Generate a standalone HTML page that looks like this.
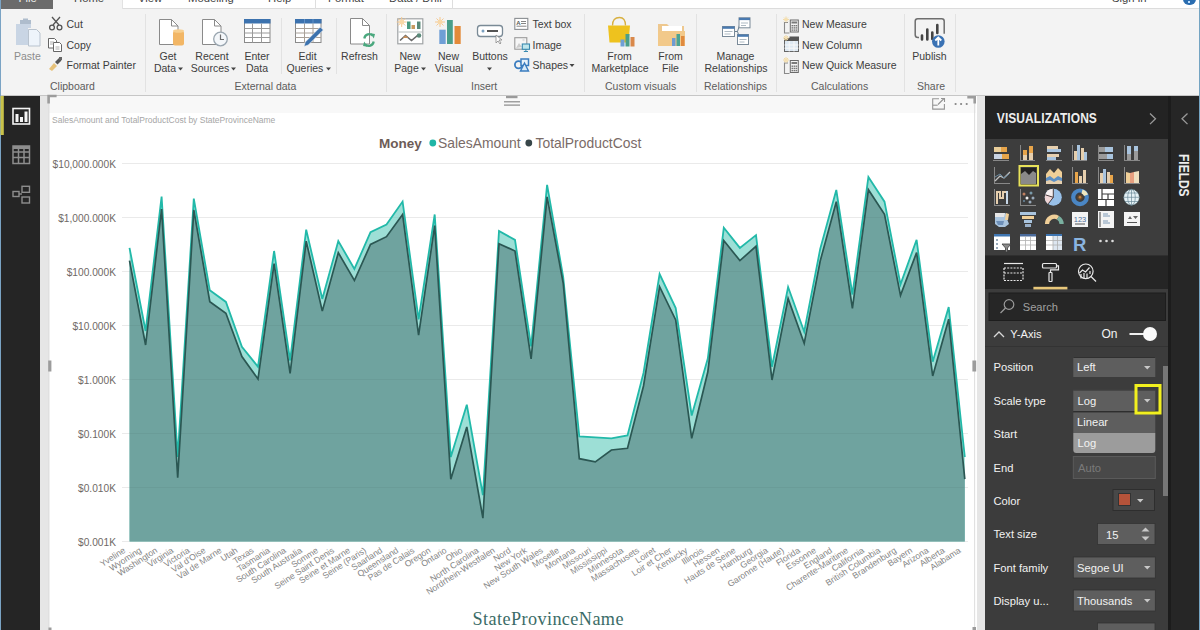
<!DOCTYPE html>
<html><head><meta charset="utf-8">
<style>
*{margin:0;padding:0;box-sizing:border-box}
html,body{width:1200px;height:630px;overflow:hidden;background:#f3f3f3;font-family:"Liberation Sans",sans-serif;position:relative}
.a{position:absolute}
.t{position:absolute;white-space:nowrap;font-size:11px;color:#333;line-height:1}
svg.chart{position:absolute;left:0;top:0}
.yl{font-family:"Liberation Sans",sans-serif;font-size:10.2px;fill:#6f6966}
.xl{font-family:"Liberation Sans",sans-serif;font-size:8.7px;fill:#858585}
/* tabs */
#tabs{left:0;top:0;width:1200px;height:9px;background:#fff;border-bottom:1px solid #dcdcdc}
#file{left:1px;top:0;width:52px;height:9px;background:#6b6b6b}
#home{left:53px;top:0;width:69px;height:10px;background:#f3f3f3}
.tab{position:absolute;top:-8px;font-size:11.3px;color:#444;white-space:nowrap;line-height:1}
/* ribbon */
#ribbon{left:0;top:9px;width:1200px;height:87px;background:#f3f3f3;border-bottom:1px solid #c6c6c6}
.sep{position:absolute;top:12px;width:1px;height:80px;background:#e0e0e0}
.grp{position:absolute;top:80px;font-size:11px;color:#555;white-space:nowrap;line-height:1}
/* rail */
#rail{left:0;top:96px;width:40px;height:534px;background:#252525}
#leftline{left:0;top:0;width:1px;height:630px;background:#7aa3c4}
#rightline{left:1198.5px;top:0;width:1.5px;height:630px;background:#74a4c2}
#canvasbg{left:40px;top:96px;width:945px;height:534px;background:#e6e6e6}
#page{left:49px;top:96px;width:927.5px;height:534px;background:#fff}
#vizpane{left:985px;top:96px;width:183px;height:534px;background:#3b3b3b}
#fieldspane{left:1168px;top:96px;width:29px;height:534px;background:#252525;border-left:1px solid #1a1a1a}
</style></head><body>
<div id="tabs" class="a"></div>
<div id="file" class="a"></div>
<div id="home" class="a"></div>
<div id="ribbon" class="a"></div>
<div id="canvasbg" class="a"></div>
<div id="page" class="a"></div>
<div id="rail" class="a"></div>
<div id="leftline" class="a"></div>
<div id="vizpane" class="a"></div>
<div id="fieldspane" class="a"></div>
<div id="rightline" class="a"></div>

<div class="tab" style="left:74px;top:-7.5px">Home</div>
<div class="tab" style="left:138px;top:-7.5px">View</div>
<div class="tab" style="left:188px;top:-7.5px">Modeling</div>
<div class="tab" style="left:268px;top:-7.5px">Help</div>
<div class="a" style="left:315px;top:0;width:1px;height:9px;background:#dedede"></div><div class="a" style="left:452px;top:0;width:1px;height:9px;background:#dedede"></div><div class="a" style="left:122px;top:0;width:1px;height:9px;background:#e2e2e2"></div>
<div class="tab" style="left:328px;top:-7.5px">Format</div>
<div class="tab" style="left:389px;top:-7.5px">Data / Drill</div>
<div class="tab" style="left:18.5px;top:-7.5px;color:#f0f0f0">File</div>
<div class="tab" style="left:1112px;top:-7.5px">Sign in</div>
<div class="a" style="left:1182.5px;top:-7.5px;width:13px;height:12.5px;border-radius:7px;background:#2a6db0"></div><div class="a" style="left:1187.8px;top:1px;width:2.4px;height:2.4px;background:#bfe0ff"></div>
<svg class="a" style="left:0;top:0" width="1200" height="96" font-family="Liberation Sans, sans-serif" font-size="10.5">
<g fill="#e2e2e2">
<rect x="145" y="14" width="1" height="78"/><rect x="386" y="14" width="1" height="78"/>
<rect x="584" y="14" width="1" height="78"/><rect x="696" y="14" width="1" height="78"/>
<rect x="776" y="14" width="1" height="78"/><rect x="904" y="14" width="1" height="78"/>
<rect x="955" y="14" width="1" height="78"/>
<rect x="281" y="18" width="1" height="56"/><rect x="336" y="18" width="1" height="56"/>
</g>
<!-- Paste -->
<rect x="16" y="24" width="12" height="21" fill="#c9d5e4"/>
<rect x="20" y="20" width="11" height="4" fill="#aebccc"/><rect x="23" y="18.5" width="5" height="3" fill="#aebccc"/>
<rect x="28" y="24" width="3" height="4" fill="#c9d5e4"/>
<path d="M28.5 29.5h8l3.5 3.5v13h-11.5z" fill="#eef4fb" stroke="#b9c3ce" stroke-width="1"/>
<!-- Cut -->
<g stroke="#555" stroke-width="1.3" fill="none"><path d="M52 17l7 8M60 17l-7 8"/><circle cx="52" cy="27.5" r="2.4"/><circle cx="59.5" cy="27.5" r="2.4"/></g>
<!-- Copy -->
<g stroke="#666" stroke-width="1" fill="#fff"><path d="M48.5 38.5h6l2 2v7.5h-8z"/><path d="M53.5 42.5h6l2 2v7h-8z"/></g>
<g stroke="#999" stroke-width="0.8"><path d="M50 42h4M50 44h4M55.5 47h4M55.5 49h4"/></g>
<!-- Format painter -->
<path d="M49 69l5-6 3 3-5 5z" fill="#e7c27a"/><path d="M55 62l4-4 2.5 2.5-4 4z" fill="#555"/><rect x="59" y="57" width="3" height="3" fill="#666"/>
<g fill="#3d3d3d">
<text x="66.5" y="28">Cut</text><text x="66.5" y="49">Copy</text><text x="66.5" y="69">Format Painter</text>
</g>
<text x="14" y="60" fill="#8c8c8c">Paste</text>
<g fill="#5c5c5c">
<text x="50" y="90">Clipboard</text>
<text x="234.5" y="90">External data</text>
<text x="471" y="90">Insert</text>
<text x="605" y="90">Custom visuals</text>
<text x="704" y="90">Relationships</text>
<text x="811" y="90">Calculations</text>
<text x="917" y="90">Share</text>
</g>
<!-- Get Data -->
<path d="M159.5 19.5h12l6.5 6.5v18.5h-18.5z" fill="#fff" stroke="#8a8a8a" stroke-width="1"/>
<path d="M171.5 19.5v6.5h6.5" fill="none" stroke="#8a8a8a" stroke-width="1"/>
<rect x="173" y="31" width="11" height="14.5" rx="2" fill="#f2b665"/><ellipse cx="178.5" cy="31" rx="5.5" ry="1.8" fill="#f7cf8f"/>
<!-- Recent -->
<path d="M202.5 19.5h12l6.5 6.5v18.5h-18.5z" fill="#fff" stroke="#8a8a8a" stroke-width="1"/>
<path d="M214.5 19.5v6.5h6.5" fill="none" stroke="#8a8a8a" stroke-width="1"/>
<circle cx="220.5" cy="39" r="6.8" fill="#f4f7fa" stroke="#9aa6b0" stroke-width="1.3"/>
<path d="M220.5 34.5v5h3.5" fill="none" stroke="#6d6d6d" stroke-width="1.2"/>
<!-- Enter data -->
<rect x="244.5" y="19.5" width="25.5" height="23" fill="#fff" stroke="#8a8a8a" stroke-width="1"/>
<rect x="244" y="19" width="26.5" height="4.5" fill="#3c72ae"/>
<g stroke="#9a9a9a" stroke-width="1"><path d="M244.5 28.5h25.5M244.5 33h25.5M244.5 37.5h25.5M252.5 23.5v19M261.5 23.5v19"/></g>
<!-- Edit queries -->
<rect x="295.5" y="19.5" width="25.5" height="23" fill="#fff" stroke="#8a8a8a" stroke-width="1"/>
<rect x="295" y="19" width="26.5" height="4.5" fill="#3c72ae"/>
<path d="M304.5 19v4.5M313 19v4.5" stroke="#6a9ad0" stroke-width="0.8"/>
<g stroke="#a8a098" stroke-width="1"><path d="M295.5 28.5h25.5M295.5 33h25.5M295.5 37.5h25.5M304.5 23.5v19M313 23.5v19"/></g>
<path d="M304 46.5l1.3-4.5 15-15 3 3-15 15z" fill="#3c72ae" stroke="#f3f3f3" stroke-width="0.6"/>
<!-- Refresh -->
<path d="M350.5 18.5h12l7 7v18.5h-19z" fill="#fff" stroke="#8a8a8a" stroke-width="1"/>
<path d="M362.5 18.5v7h7" fill="none" stroke="#8a8a8a" stroke-width="1"/>
<g fill="none" stroke="#4aa87e" stroke-width="2.2"><path d="M364.3 38.5a5 5 0 0 1 8.6-2.8"/><path d="M373.7 41.5a5 5 0 0 1-8.6 2.8"/></g>
<path d="M370.5 33.3l4.5 0.8-1.2 4.3z M367.5 46.7l-4.5-0.8 1.2-4.3z" fill="#4aa87e"/>
<g fill="#3d3d3d" text-anchor="middle">
<text x="168" y="60">Get</text><text x="165" y="72">Data</text>
<text x="212" y="60">Recent</text><text x="210" y="72">Sources</text>
<text x="257" y="60">Enter</text><text x="257" y="72">Data</text>
<text x="307.5" y="60">Edit</text><text x="305" y="72">Queries</text>
<text x="359.5" y="60">Refresh</text>
<text x="410" y="60">New</text><text x="406.5" y="72">Page</text>
<text x="448.5" y="60">New</text><text x="449" y="72">Visual</text>
<text x="490" y="60">Buttons</text>
<text x="619.5" y="60">From</text><text x="620" y="72">Marketplace</text>
<text x="670.5" y="60">From</text><text x="670.5" y="72">File</text>
<text x="735.5" y="60">Manage</text><text x="736" y="72">Relationships</text>
<text x="929.5" y="60">Publish</text>
</g>
<g fill="#444"><path d="M178 67.5h5l-2.5 3z M231 67.5h5l-2.5 3z M326 67.5h5l-2.5 3z M421 67.5h5l-2.5 3z M487 67.5h5l-2.5 3z M569.5 64h5l-2.5 3z"/></g>
<!-- New Page -->
<rect x="397.8" y="18.8" width="25" height="25" fill="#fff" stroke="#a0a4a6" stroke-width="1.2"/>
<rect x="407" y="21.5" width="3.5" height="7.5" fill="#4a9a80"/><rect x="411.5" y="25" width="3.5" height="4" fill="#c89a60"/><rect x="417" y="21.5" width="3.5" height="7.5" fill="#5a8a7a"/>
<rect x="398.5" y="31.5" width="24" height="1" fill="#b8c0c0"/>
<path d="M400 40.5l5.5-5 6 5 5.5-4.5 2.5-0.5" fill="none" stroke="#6a6a6a" stroke-width="1.6"/><path d="M402.5 38l3-2.5 3 2.5z" fill="#c8905a"/>
<circle cx="419" cy="35.5" r="2.3" fill="#5a8a7a"/>
<g stroke="#f5c890" stroke-width="1"><path d="M401.7 17v10M396.7 22h10M398.2 18.5l7 7M405.2 18.5l-7 7"/></g><circle cx="401.7" cy="22" r="2.5" fill="#f8d8a8"/>
<!-- New Visual -->
<rect x="439.3" y="29.7" width="6.4" height="14.3" fill="#6f9fd6"/><rect x="447" y="20" width="5.8" height="24" fill="#4a9e8a"/><rect x="454.5" y="26" width="6.2" height="18" fill="#e38a3a"/>
<g stroke="#f5c890" stroke-width="1"><path d="M440 17v10M435 22h10M436.5 18.5l7 7M443.5 18.5l-7 7"/></g><circle cx="440" cy="22" r="2.5" fill="#f8d8a8"/>
<!-- Buttons -->
<rect x="477.5" y="25.5" width="25" height="11" rx="3" fill="#fff" stroke="#7a8a96" stroke-width="1.3"/>
<circle cx="483" cy="31" r="1.5" fill="#7aa0c0"/><rect x="487" y="30" width="11" height="2" fill="#555"/>
<path d="M496 35l0 8 2-2 2 3 1-1-2-3h3z" fill="#fff" stroke="#888" stroke-width="0.8"/>
<!-- text box / image / shapes -->
<rect x="514.8" y="18.4" width="13" height="11" fill="#fff" stroke="#8a8e92" stroke-width="1.1"/>
<text x="516.3" y="24.6" font-size="6" font-weight="bold" fill="#555">A</text>
<path d="M521 21.5h5M521 23.5h5M516.5 26.2h10" stroke="#777" stroke-width="0.9"/>
<rect x="514.8" y="37.7" width="12" height="11.5" fill="#f6f6f6" stroke="#9a9a9a" stroke-width="1.1"/>
<circle cx="523.5" cy="40" r="1.2" fill="#ddd"/><path d="M516 48l3-5 3 4" fill="#ccc"/>
<rect x="522.3" y="44" width="7.2" height="5.3" fill="#bfe6ec" stroke="#3a8ab0" stroke-width="1.1"/><path d="M525.9 49.3v2M523.8 51.5h4.2" stroke="#3a8ab0" stroke-width="1"/>
<circle cx="518.5" cy="64.8" r="3.6" fill="none" stroke="#3a7cbf" stroke-width="1.8"/>
<rect x="521" y="59" width="7.5" height="6.5" fill="#e8f2fa" stroke="#3a7cbf" stroke-width="1.5"/>
<path d="M524.5 63l-4 8h8z" fill="#d8eaf8" stroke="#3a7cbf" stroke-width="1.4"/>
<g fill="#3d3d3d"><text x="532.5" y="28">Text box</text><text x="532.5" y="49">Image</text><text x="532.5" y="69">Shapes</text>
<text x="802" y="28">New Measure</text><text x="802" y="49">New Column</text><text x="802" y="69">New Quick Measure</text></g>
<!-- marketplace -->
<path d="M608 25.5h22l-1.5 17h-19z" fill="#eec21e"/><path d="M612.5 25.5q0-8 7-8q6 0 6 8" fill="none" stroke="#d8b040" stroke-width="1.3"/>
<rect x="620.5" y="39.5" width="4" height="7" fill="#6f9fd6"/><rect x="625.5" y="34" width="4" height="12.5" fill="#4a9e8a"/><rect x="630.5" y="37" width="4" height="9.5" fill="#d9884a"/>
<!-- from file -->
<path d="M658 24h9l2 2h15v20h-26z" fill="#eec88f"/><rect x="662" y="26" width="20" height="6" fill="#fff"/><path d="M658 31h27v15h-27z" fill="#f2c98a"/>
<rect x="672" y="38" width="3.5" height="8" fill="#6d9bd2"/><rect x="676.5" y="34" width="3.5" height="12" fill="#4aa393"/><rect x="681" y="36" width="3.5" height="10" fill="#e08a3e"/>
<!-- manage relationships -->
<path d="M735 31.5h2.5l2.5-8M737.5 31.5l2 6.5" fill="none" stroke="#6a7f90" stroke-width="1"/>
<g fill="#fff" stroke="#7a8a98" stroke-width="1"><rect x="722.5" y="26.5" width="12" height="10"/><rect x="739" y="17.8" width="11" height="10"/><rect x="737.5" y="34.5" width="11" height="10"/></g>
<g fill="#4a7ab0"><rect x="722.5" y="26.5" width="12" height="2.3"/><rect x="739" y="17.8" width="11" height="2.3"/><rect x="737.5" y="34.5" width="11" height="2.3"/></g>
<g stroke="#9aa8b4" stroke-width="0.8"><path d="M724.5 31.5h8M724.5 34h6M741 23h7M741 25.5h5M739.5 39.5h7M739.5 42h5"/></g>
<!-- calc icons -->
<path d="M788 22.5h-3.5v10.5h5" fill="none" stroke="#8a8a8a" stroke-width="1.1"/>
<rect x="790.3" y="20.0" width="8" height="12" fill="#f4f4f4" stroke="#6a6a6a" stroke-width="1"/>
<rect x="791.5" y="21.5" width="5.6" height="2" fill="#7a7a7a"/>
<g fill="#777"><rect x="791.5" y="25.0" width="1.6" height="1.4"/><rect x="793.6" y="25.0" width="1.6" height="1.4"/><rect x="795.6" y="25.0" width="1.6" height="1.4"/><rect x="791.5" y="27.2" width="1.6" height="1.4"/><rect x="793.6" y="27.2" width="1.6" height="1.4"/><rect x="795.6" y="27.2" width="1.6" height="1.4"/><rect x="791.5" y="29.4" width="1.6" height="1.4"/><rect x="793.6" y="29.4" width="1.6" height="1.4"/><rect x="795.6" y="29.4" width="1.6" height="1.4"/></g>
<g stroke="#f0d8a0" stroke-width="0.9"><path d="M786 16.5v6M783 19.5h6M784 17.5l4 4M788 17.5l-4 4"/></g><circle cx="786" cy="19.5" r="1.6" fill="#f6e0b0"/>
<path d="M788 63h-3.5v10.5h5" fill="none" stroke="#8a8a8a" stroke-width="1.1"/>
<rect x="790.3" y="60.5" width="8" height="12" fill="#f4f4f4" stroke="#6a6a6a" stroke-width="1"/>
<rect x="791.5" y="62" width="5.6" height="2" fill="#7a7a7a"/>
<g fill="#777"><rect x="791.5" y="65.5" width="1.6" height="1.4"/><rect x="793.6" y="65.5" width="1.6" height="1.4"/><rect x="795.6" y="65.5" width="1.6" height="1.4"/><rect x="791.5" y="67.7" width="1.6" height="1.4"/><rect x="793.6" y="67.7" width="1.6" height="1.4"/><rect x="795.6" y="67.7" width="1.6" height="1.4"/><rect x="791.5" y="69.9" width="1.6" height="1.4"/><rect x="793.6" y="69.9" width="1.6" height="1.4"/><rect x="795.6" y="69.9" width="1.6" height="1.4"/></g>
<g stroke="#f0d8a0" stroke-width="0.9"><path d="M786 57v6M783 60h6M784 58l4 4M788 58l-4 4"/></g><circle cx="786" cy="60" r="1.6" fill="#f6e0b0"/>
<rect x="784.5" y="38.5" width="14" height="13" fill="#dde8f2" stroke="#666" stroke-width="1"/>
<rect x="784.5" y="38" width="14" height="3" fill="#555"/><path d="M784.5 45h14M784.5 48.2h14M789.2 41v10.5M794 41v10.5" stroke="#f8f8f8" stroke-width="1"/>
<rect x="789.5" y="36.5" width="9.5" height="3.5" fill="#555"/>
<g stroke="#f0d8a0" stroke-width="0.9"><path d="M786 35v6M783 38h6M784 36l4 4M788 36l-4 4"/></g><circle cx="786" cy="38" r="1.6" fill="#f6e0b0"/>
<!-- publish -->
<path d="M919 37.5h-1q-2.8 0-2.8-2.8v-13.5q0-2.5 2.5-2.5h24q2.5 0 2.5 2.5v12.5" fill="none" stroke="#6e6e6e" stroke-width="1.5"/>
<g stroke="#444" stroke-width="2.6" stroke-linecap="round"><path d="M922 35.5v4M927.3 29.5v10M932.3 32.5v6.5M937.3 25v8"/></g>
<circle cx="938.3" cy="41.5" r="6.3" fill="#3a72b4"/><path d="M938.3 45.5v-7M935.3 40.5l3-3 3 3" fill="none" stroke="#fff" stroke-width="1.8"/>
</svg>

<svg class="chart" width="1200" height="630" viewBox="0 0 1200 630">
<line x1="122" y1="163.5" x2="968" y2="163.5" stroke="#f4f4f4" stroke-width="1"/>
<text x="116" y="167.5" text-anchor="end" class="yl">&#36;10,000.000K</text>
<line x1="122" y1="217.5" x2="968" y2="217.5" stroke="#f4f4f4" stroke-width="1"/>
<text x="116" y="221.5" text-anchor="end" class="yl">&#36;1,000.000K</text>
<line x1="122" y1="271.5" x2="968" y2="271.5" stroke="#f4f4f4" stroke-width="1"/>
<text x="116" y="275.5" text-anchor="end" class="yl">&#36;100.000K</text>
<line x1="122" y1="325.5" x2="968" y2="325.5" stroke="#f4f4f4" stroke-width="1"/>
<text x="116" y="329.5" text-anchor="end" class="yl">&#36;10.000K</text>
<line x1="122" y1="379.5" x2="968" y2="379.5" stroke="#f4f4f4" stroke-width="1"/>
<text x="116" y="383.5" text-anchor="end" class="yl">&#36;1.000K</text>
<line x1="122" y1="433.5" x2="968" y2="433.5" stroke="#f4f4f4" stroke-width="1"/>
<text x="116" y="437.5" text-anchor="end" class="yl">&#36;0.100K</text>
<line x1="122" y1="487.5" x2="968" y2="487.5" stroke="#f4f4f4" stroke-width="1"/>
<text x="116" y="491.5" text-anchor="end" class="yl">&#36;0.010K</text>
<line x1="122" y1="541.5" x2="968" y2="541.5" stroke="#f4f4f4" stroke-width="1"/>
<text x="116" y="545.5" text-anchor="end" class="yl">&#36;0.001K</text>
<polygon points="129.5,541.5 129.5,247.8 145.6,331.0 161.6,196.6 177.7,457.0 193.8,198.6 209.8,290.3 225.9,301.9 241.9,346.7 258.0,366.7 274.1,251.0 290.1,360.5 306.2,229.6 322.3,298.9 338.3,241.1 354.4,268.9 370.5,232.2 386.5,224.6 402.6,201.6 418.6,319.3 434.7,214.5 450.8,457.1 466.8,404.7 482.9,495.2 499.0,231.0 515.0,239.9 531.1,346.4 547.1,184.9 563.2,277.0 579.3,436.5 595.3,437.4 611.4,438.3 627.5,435.5 643.5,373.0 659.6,274.0 675.7,308.0 691.7,415.5 707.8,358.6 723.8,227.8 739.9,247.9 756.0,235.1 772.0,366.7 788.1,287.0 804.2,331.7 820.2,249.0 836.3,190.0 852.4,294.5 868.4,177.0 884.5,201.7 900.5,284.3 916.6,239.8 932.7,361.7 948.7,307.1 964.8,457.0 964.8,541.5" fill="#9ddfd6"/>
<polygon points="129.5,541.5 129.5,260.6 145.6,345.0 161.6,209.0 177.7,477.8 193.8,210.0 209.8,301.7 225.9,313.3 241.9,356.5 258.0,379.0 274.1,263.7 290.1,373.3 306.2,241.1 322.3,311.1 338.3,252.7 354.4,280.5 370.5,244.4 386.5,236.7 402.6,214.4 418.6,335.2 434.7,225.6 450.8,479.3 466.8,426.9 482.9,518.1 499.0,243.7 515.0,251.0 531.1,358.8 547.1,196.8 563.2,283.0 579.3,458.7 595.3,461.9 611.4,450.0 627.5,448.3 643.5,386.0 659.6,286.7 675.7,320.0 691.7,438.3 707.8,372.0 723.8,240.5 739.9,260.6 756.0,246.3 772.0,380.0 788.1,298.5 804.2,343.3 820.2,261.0 836.3,201.7 852.4,308.3 868.4,189.7 884.5,214.4 900.5,295.4 916.6,252.5 932.7,376.0 948.7,319.2 964.8,479.2 964.8,541.5" fill="#6fa39f"/>
<line x1="122" y1="163.5" x2="968" y2="163.5" stroke="#000" stroke-opacity="0.04" stroke-width="1"/>
<line x1="122" y1="217.5" x2="968" y2="217.5" stroke="#000" stroke-opacity="0.04" stroke-width="1"/>
<line x1="122" y1="271.5" x2="968" y2="271.5" stroke="#000" stroke-opacity="0.04" stroke-width="1"/>
<line x1="122" y1="325.5" x2="968" y2="325.5" stroke="#000" stroke-opacity="0.04" stroke-width="1"/>
<line x1="122" y1="379.5" x2="968" y2="379.5" stroke="#000" stroke-opacity="0.04" stroke-width="1"/>
<line x1="122" y1="433.5" x2="968" y2="433.5" stroke="#000" stroke-opacity="0.04" stroke-width="1"/>
<line x1="122" y1="487.5" x2="968" y2="487.5" stroke="#000" stroke-opacity="0.04" stroke-width="1"/>
<line x1="122" y1="541.5" x2="968" y2="541.5" stroke="#000" stroke-opacity="0.04" stroke-width="1"/>
<polyline points="129.5,247.8 145.6,331.0 161.6,196.6 177.7,457.0 193.8,198.6 209.8,290.3 225.9,301.9 241.9,346.7 258.0,366.7 274.1,251.0 290.1,360.5 306.2,229.6 322.3,298.9 338.3,241.1 354.4,268.9 370.5,232.2 386.5,224.6 402.6,201.6 418.6,319.3 434.7,214.5 450.8,457.1 466.8,404.7 482.9,495.2 499.0,231.0 515.0,239.9 531.1,346.4 547.1,184.9 563.2,277.0 579.3,436.5 595.3,437.4 611.4,438.3 627.5,435.5 643.5,373.0 659.6,274.0 675.7,308.0 691.7,415.5 707.8,358.6 723.8,227.8 739.9,247.9 756.0,235.1 772.0,366.7 788.1,287.0 804.2,331.7 820.2,249.0 836.3,190.0 852.4,294.5 868.4,177.0 884.5,201.7 900.5,284.3 916.6,239.8 932.7,361.7 948.7,307.1 964.8,457.0" fill="none" stroke="#22b9a9" stroke-width="1.8" stroke-linejoin="miter"/>
<polyline points="129.5,260.6 145.6,345.0 161.6,209.0 177.7,477.8 193.8,210.0 209.8,301.7 225.9,313.3 241.9,356.5 258.0,379.0 274.1,263.7 290.1,373.3 306.2,241.1 322.3,311.1 338.3,252.7 354.4,280.5 370.5,244.4 386.5,236.7 402.6,214.4 418.6,335.2 434.7,225.6 450.8,479.3 466.8,426.9 482.9,518.1 499.0,243.7 515.0,251.0 531.1,358.8 547.1,196.8 563.2,283.0 579.3,458.7 595.3,461.9 611.4,450.0 627.5,448.3 643.5,386.0 659.6,286.7 675.7,320.0 691.7,438.3 707.8,372.0 723.8,240.5 739.9,260.6 756.0,246.3 772.0,380.0 788.1,298.5 804.2,343.3 820.2,261.0 836.3,201.7 852.4,308.3 868.4,189.7 884.5,214.4 900.5,295.4 916.6,252.5 932.7,376.0 948.7,319.2 964.8,479.2" fill="none" stroke="#2b5753" stroke-width="1.7" stroke-linejoin="miter"/>
<text x="126.0" y="551.8" text-anchor="end" class="xl" transform="rotate(-33 126.0 551.8)">Yveline</text>
<text x="142.1" y="551.8" text-anchor="end" class="xl" transform="rotate(-33 142.1 551.8)">Wyoming</text>
<text x="158.1" y="551.8" text-anchor="end" class="xl" transform="rotate(-33 158.1 551.8)">Washington</text>
<text x="174.2" y="551.8" text-anchor="end" class="xl" transform="rotate(-33 174.2 551.8)">Virginia</text>
<text x="190.3" y="551.8" text-anchor="end" class="xl" transform="rotate(-33 190.3 551.8)">Victoria</text>
<text x="206.3" y="551.8" text-anchor="end" class="xl" transform="rotate(-33 206.3 551.8)">Val d'Oise</text>
<text x="222.4" y="551.8" text-anchor="end" class="xl" transform="rotate(-33 222.4 551.8)">Val de Marne</text>
<text x="238.4" y="551.8" text-anchor="end" class="xl" transform="rotate(-33 238.4 551.8)">Utah</text>
<text x="254.5" y="551.8" text-anchor="end" class="xl" transform="rotate(-33 254.5 551.8)">Texas</text>
<text x="270.6" y="551.8" text-anchor="end" class="xl" transform="rotate(-33 270.6 551.8)">Tasmania</text>
<text x="286.6" y="551.8" text-anchor="end" class="xl" transform="rotate(-33 286.6 551.8)">South Carolina</text>
<text x="302.7" y="551.8" text-anchor="end" class="xl" transform="rotate(-33 302.7 551.8)">South Australia</text>
<text x="318.8" y="551.8" text-anchor="end" class="xl" transform="rotate(-33 318.8 551.8)">Somme</text>
<text x="334.8" y="551.8" text-anchor="end" class="xl" transform="rotate(-33 334.8 551.8)">Seine Saint Denis</text>
<text x="350.9" y="551.8" text-anchor="end" class="xl" transform="rotate(-33 350.9 551.8)">Seine et Marne</text>
<text x="367.0" y="551.8" text-anchor="end" class="xl" transform="rotate(-33 367.0 551.8)">Seine (Paris)</text>
<text x="383.0" y="551.8" text-anchor="end" class="xl" transform="rotate(-33 383.0 551.8)">Saarland</text>
<text x="399.1" y="551.8" text-anchor="end" class="xl" transform="rotate(-33 399.1 551.8)">Queensland</text>
<text x="415.1" y="551.8" text-anchor="end" class="xl" transform="rotate(-33 415.1 551.8)">Pas de Calais</text>
<text x="431.2" y="551.8" text-anchor="end" class="xl" transform="rotate(-33 431.2 551.8)">Oregon</text>
<text x="447.3" y="551.8" text-anchor="end" class="xl" transform="rotate(-33 447.3 551.8)">Ontario</text>
<text x="463.3" y="551.8" text-anchor="end" class="xl" transform="rotate(-33 463.3 551.8)">Ohio</text>
<text x="479.4" y="551.8" text-anchor="end" class="xl" transform="rotate(-33 479.4 551.8)">North Carolina</text>
<text x="495.5" y="551.8" text-anchor="end" class="xl" transform="rotate(-33 495.5 551.8)">Nordrhein-Westfalen</text>
<text x="511.5" y="551.8" text-anchor="end" class="xl" transform="rotate(-33 511.5 551.8)">Nord</text>
<text x="527.6" y="551.8" text-anchor="end" class="xl" transform="rotate(-33 527.6 551.8)">New York</text>
<text x="543.6" y="551.8" text-anchor="end" class="xl" transform="rotate(-33 543.6 551.8)">New South Wales</text>
<text x="559.7" y="551.8" text-anchor="end" class="xl" transform="rotate(-33 559.7 551.8)">Moselle</text>
<text x="575.8" y="551.8" text-anchor="end" class="xl" transform="rotate(-33 575.8 551.8)">Montana</text>
<text x="591.8" y="551.8" text-anchor="end" class="xl" transform="rotate(-33 591.8 551.8)">Missouri</text>
<text x="607.9" y="551.8" text-anchor="end" class="xl" transform="rotate(-33 607.9 551.8)">Mississippi</text>
<text x="624.0" y="551.8" text-anchor="end" class="xl" transform="rotate(-33 624.0 551.8)">Minnesota</text>
<text x="640.0" y="551.8" text-anchor="end" class="xl" transform="rotate(-33 640.0 551.8)">Massachusets</text>
<text x="656.1" y="551.8" text-anchor="end" class="xl" transform="rotate(-33 656.1 551.8)">Loiret</text>
<text x="672.2" y="551.8" text-anchor="end" class="xl" transform="rotate(-33 672.2 551.8)">Loir et Cher</text>
<text x="688.2" y="551.8" text-anchor="end" class="xl" transform="rotate(-33 688.2 551.8)">Kentucky</text>
<text x="704.3" y="551.8" text-anchor="end" class="xl" transform="rotate(-33 704.3 551.8)">Illinois</text>
<text x="720.3" y="551.8" text-anchor="end" class="xl" transform="rotate(-33 720.3 551.8)">Hessen</text>
<text x="736.4" y="551.8" text-anchor="end" class="xl" transform="rotate(-33 736.4 551.8)">Hauts de Seine</text>
<text x="752.5" y="551.8" text-anchor="end" class="xl" transform="rotate(-33 752.5 551.8)">Hamburg</text>
<text x="768.5" y="551.8" text-anchor="end" class="xl" transform="rotate(-33 768.5 551.8)">Georgia</text>
<text x="784.6" y="551.8" text-anchor="end" class="xl" transform="rotate(-33 784.6 551.8)">Garonne (Haute)</text>
<text x="800.7" y="551.8" text-anchor="end" class="xl" transform="rotate(-33 800.7 551.8)">Florida</text>
<text x="816.7" y="551.8" text-anchor="end" class="xl" transform="rotate(-33 816.7 551.8)">Essonne</text>
<text x="832.8" y="551.8" text-anchor="end" class="xl" transform="rotate(-33 832.8 551.8)">England</text>
<text x="848.9" y="551.8" text-anchor="end" class="xl" transform="rotate(-33 848.9 551.8)">Charente-Maritime</text>
<text x="864.9" y="551.8" text-anchor="end" class="xl" transform="rotate(-33 864.9 551.8)">California</text>
<text x="881.0" y="551.8" text-anchor="end" class="xl" transform="rotate(-33 881.0 551.8)">British Columbia</text>
<text x="897.0" y="551.8" text-anchor="end" class="xl" transform="rotate(-33 897.0 551.8)">Brandenburg</text>
<text x="913.1" y="551.8" text-anchor="end" class="xl" transform="rotate(-33 913.1 551.8)">Bayern</text>
<text x="929.2" y="551.8" text-anchor="end" class="xl" transform="rotate(-33 929.2 551.8)">Arizona</text>
<text x="945.2" y="551.8" text-anchor="end" class="xl" transform="rotate(-33 945.2 551.8)">Alberta</text>
<text x="961.3" y="551.8" text-anchor="end" class="xl" transform="rotate(-33 961.3 551.8)">Alabama</text>
</svg>
<svg class="a" style="left:0;top:0" width="985" height="630" font-family="Liberation Sans, sans-serif">
<rect x="49" y="96" width="927" height="17" fill="#f8f8f8"/>
<rect x="974.3" y="96" width="0.8" height="534" fill="#d4d4d4"/>
<rect x="48.6" y="96" width="0.8" height="534" fill="#d8d8d8"/>
<path d="M48.6 103.6V96h8" fill="none" stroke="#9c9c9c" stroke-width="2.6"/>
<path d="M967.3 97.3h7.4v6.3" fill="none" stroke="#9c9c9c" stroke-width="2.6"/>
<rect x="972.4" y="360.5" width="3.8" height="11" fill="#9c9c9c"/>
<rect x="48.2" y="360.5" width="3.2" height="11" fill="#9c9c9c"/><rect x="972.5" y="627" width="3.5" height="3" fill="#9c9c9c"/><rect x="48.5" y="627.5" width="3" height="2.5" fill="#9c9c9c"/>
<rect x="506" y="96" width="11.5" height="2.2" fill="#9a9a9a"/>
<rect x="504" y="101.2" width="16" height="1.2" fill="#8a8a8a"/><rect x="504" y="104.5" width="16" height="1.2" fill="#8a8a8a"/>
<g fill="none" stroke="#959595" stroke-width="1.1"><path d="M939 98.8h-6.3v10.3h11.7v-5"/><path d="M938 104.5l6-6M941 98.5h3.5v3.5"/><path d="M932.7 105.2h5"/></g>
<g fill="#858585"><circle cx="955.6" cy="104" r="1.1"/><circle cx="961.1" cy="104" r="1.1"/><circle cx="966.7" cy="104" r="1.1"/></g>
<text x="52" y="123.2" font-size="8.5" fill="#a6a6a6">SalesAmount and TotalProductCost by StateProvinceName</text>
<text x="379" y="147.6" font-size="13.5" font-weight="bold" fill="#6d5c57">Money</text>
<circle cx="432.8" cy="143" r="3.4" fill="#1fb5a6"/>
<text x="438" y="147.6" font-size="13.9" fill="#7a6b67">SalesAmount</text>
<circle cx="528.8" cy="143" r="3.4" fill="#374649"/>
<text x="535.5" y="147.6" font-size="13.9" fill="#7a6b67">TotalProductCost</text>
<text x="472.5" y="625.3" font-size="18.2" font-family="Liberation Serif, serif" fill="#3b6c67" textLength="151">StateProvinceName</text>
<rect x="0.5" y="96" width="3.3" height="39" fill="#c9c24a"/>
<g fill="none" stroke="#f4f4f4" stroke-width="1.6"><rect x="13" y="108.5" width="16.5" height="15.5"/></g>
<g fill="#f4f4f4"><rect x="15.5" y="114" width="3" height="8"/><rect x="20" y="117" width="3" height="5"/><rect x="24.5" y="111.5" width="3" height="10.5"/></g>
<g fill="none" stroke="#8d8d8d" stroke-width="1.5"><rect x="13" y="146" width="16.5" height="17.5"/><path d="M13 152h16.5M13 157.5h16.5M18.5 149v14.5M24 149v14.5"/></g>
<rect x="13" y="146" width="16.5" height="3" fill="#8d8d8d"/>
<g fill="none" stroke="#8d8d8d" stroke-width="1.4"><rect x="13" y="191.5" width="6" height="5"/><rect x="22" y="186.3" width="7.5" height="6"/><rect x="22" y="197" width="7.5" height="6"/><path d="M19 194h3"/></g>
</svg>

<svg class="a" style="left:0;top:0" width="1200" height="630" font-family="Liberation Sans, sans-serif">
<!-- pane backgrounds -->
<rect x="985" y="96" width="183" height="43" fill="#232323"/>
<rect x="985" y="139" width="183" height="116.5" fill="#3d3d3d"/>
<rect x="985" y="255.5" width="183" height="33.5" fill="#252525"/>
<rect x="985" y="289" width="183" height="341" fill="#3c3c3c"/>
<rect x="1168" y="96" width="3" height="534" fill="#1c1c1c"/>
<rect x="1171" y="96" width="28" height="534" fill="#262626"/>
<text transform="translate(996.8 122.9) scale(1 1.16)" font-size="12" font-weight="bold" fill="#eeeeee" letter-spacing="0.08">VISUALIZATIONS</text>
<path d="M1150 113.5l5.5 5.3-5.5 5.3" fill="none" stroke="#9a9a9a" stroke-width="1.3"/>
<path d="M1187.5 113.5l-5.5 5.3 5.5 5.3" fill="none" stroke="#9a9a9a" stroke-width="1.3"/>
<text transform="translate(1179 154) rotate(90) scale(1 1.24)" font-size="12" font-weight="bold" fill="#eeeeee" letter-spacing="0">FIELDS</text>
<!-- gallery row0 -->
<g transform="translate(994 145)">
 <rect x="0" y="2" width="7" height="5" fill="#e9ce9a"/><rect x="7" y="2" width="6" height="5" fill="#e8a54a"/>
 <rect x="0" y="9" width="8" height="5" fill="#c9d3e2"/><rect x="8" y="9" width="7" height="5" fill="#e8a54a"/>
 <rect x="-1" y="15" width="16" height="1" fill="#888"/>
</g>
<g transform="translate(1020 145)">
 <rect x="0" y="0" width="1" height="16" fill="#888"/><rect x="0" y="15" width="15" height="1" fill="#888"/>
 <rect x="3" y="5" width="4" height="5" fill="#e8a54a"/><rect x="3" y="10" width="4" height="5" fill="#e6cfae"/>
 <rect x="9" y="1" width="4" height="7" fill="#e8a54a"/><rect x="9" y="8" width="4" height="7" fill="#e6cfae"/>
</g>
<g transform="translate(1046 145)">
 <rect x="1" y="1" width="11" height="3" fill="#e6cfae"/><rect x="1" y="4" width="14" height="3" fill="#a9c4de"/>
 <rect x="1" y="9" width="12" height="3" fill="#e6cfae"/><rect x="1" y="12" width="9" height="3" fill="#a9c4de"/>
 <rect x="0" y="15" width="16" height="1" fill="#888"/>
</g>
<g transform="translate(1072 145)">
 <rect x="0" y="0" width="1" height="16" fill="#888"/><rect x="0" y="15" width="15" height="1" fill="#888"/>
 <rect x="2" y="6" width="3" height="9" fill="#e6cfae"/><rect x="5" y="0" width="3" height="15" fill="#a9c4de"/>
 <rect x="9" y="3" width="3" height="12" fill="#e6cfae"/><rect x="12" y="7" width="3" height="8" fill="#a9c4de"/>
</g>
<g transform="translate(1098 145)">
 <rect x="1" y="2" width="6" height="5" fill="#9a9a9a"/><rect x="7" y="2" width="8" height="5" fill="#a9c4de"/>
 <rect x="1" y="9" width="8" height="5" fill="#9a9a9a"/><rect x="9" y="9" width="6" height="5" fill="#a9c4de"/>
 <rect x="0" y="0" width="1" height="16" fill="#888"/><rect x="0" y="15" width="16" height="1" fill="#888"/>
</g>
<g transform="translate(1124 145)">
 <rect x="0" y="0" width="1" height="16" fill="#888"/><rect x="0" y="15" width="16" height="1" fill="#888"/>
 <rect x="3" y="1" width="4" height="8" fill="#a9c4de"/><rect x="3" y="9" width="4" height="6" fill="#9a9a9a"/>
 <rect x="10" y="1" width="4" height="5" fill="#a9c4de"/><rect x="10" y="6" width="4" height="9" fill="#9a9a9a"/>
</g>
<!-- row1 -->
<g transform="translate(994 167)">
 <rect x="0" y="0" width="1" height="17" fill="#888"/><rect x="0" y="16" width="16" height="1" fill="#888"/>
 <path d="M1 14l5-5 4 2 6-6" fill="none" stroke="#c0c0c0" stroke-width="1.3"/><path d="M1 10l5-3 4 4 5-4" fill="none" stroke="#6a8aa0" stroke-width="1"/>
</g>
<rect x="1019.5" y="166" width="18.5" height="19.5" fill="none" stroke="#e8e25a" stroke-width="2"/>
<g transform="translate(1021 168)">
 <rect x="0" y="0" width="15" height="16" fill="#222"/>
 <path d="M0 6l4-3 4 4 4-4 3 2v11h-15z" fill="#8a8a8a"/>
</g>
<g transform="translate(1046 167)">
 <path d="M0 7l4-5 4 4 4-5 4 4v12h-16z" fill="#f0cf98"/>
 <path d="M0 11l4-2 4 3 4-3 4 2v6h-16z" fill="#5d8fc4"/>
 <path d="M0 14l4-1 4 2 4-2 4 1v3h-16z" fill="#e6cfae"/>
</g>
<g transform="translate(1072 167)">
 <rect x="0" y="0" width="1" height="17" fill="#888"/><rect x="0" y="16" width="16" height="1" fill="#888"/>
 <rect x="3" y="5" width="3" height="11" fill="#e8a54a"/><rect x="7" y="9" width="3" height="7" fill="#e6cfae"/><rect x="11" y="3" width="3" height="13" fill="#e6cfae"/>
</g>
<g transform="translate(1098 167)">
 <rect x="0" y="0" width="1" height="17" fill="#888"/><rect x="0" y="16" width="16" height="1" fill="#888"/>
 <rect x="2" y="6" width="3" height="10" fill="#e6cfae"/><rect x="5" y="2" width="3" height="14" fill="#a9c4de"/><rect x="9" y="5" width="3" height="11" fill="#e6cfae"/><rect x="12" y="8" width="3" height="8" fill="#e8a54a"/>
</g>
<g transform="translate(1124 167)">
 <rect x="0" y="0" width="1" height="17" fill="#888"/><rect x="0" y="16" width="16" height="1" fill="#888"/>
 <path d="M2 5l4 1v10h-4z" fill="#f0cf98"/><path d="M6 6l4-1v11h-4z" fill="#e8a080"/><path d="M10 5l5-1v12h-5z" fill="#f0e0c0"/>
</g>
<!-- row2 -->
<g transform="translate(994 189)">
 <rect x="0" y="0" width="1" height="17" fill="#888"/><rect x="0" y="16" width="16" height="1" fill="#888"/>
 <path d="M3 15v-12h3v6h3v-6h4v12" fill="none" stroke="#e6cfae" stroke-width="2"/>
 <rect x="12" y="2" width="2" height="13" fill="#c8d8e8"/>
</g>
<g transform="translate(1020 189)">
 <rect x="0" y="0" width="1" height="17" fill="#888"/><rect x="0" y="16" width="16" height="1" fill="#888"/>
 <circle cx="4" cy="5" r="1.5" fill="#c08060"/><circle cx="7" cy="9" r="1.5" fill="#f0f0f0"/><circle cx="11" cy="4" r="1.5" fill="#7a9aaa"/><circle cx="13" cy="9" r="1.5" fill="#9ab"/><circle cx="10" cy="13" r="1.5" fill="#9ab"/><circle cx="4" cy="12" r="1" fill="#6a8aa0"/>
</g>
<circle cx="1053.3" cy="197.3" r="8.5" fill="#98c0e8"/>
<path d="M1053.3 197.3L1053.3 188.8A8.5 8.5 0 0 0 1045.2 194.8z" fill="#f6eeee"/>
<path d="M1053.3 197.3L1045.2 194.8A8.5 8.5 0 0 0 1048 204z" fill="#eed4d4"/>
<path d="M1053.3 188.8v8.5l-8-2.5M1053.3 197.3l-5 6.5" fill="none" stroke="#3a2a2a" stroke-width="0.9"/>
<circle cx="1080" cy="197.3" r="6.8" fill="none" stroke="#4a86c4" stroke-width="4.2"/>
<path d="M1082.5 189.5a8.5 8.5 0 0 1 5.5 5l-4 1.5a4 4 0 0 0-2.5-2.5z" fill="#f0e8c0"/>
<circle cx="1080" cy="197.3" r="2.6" fill="#6a4a2a"/><circle cx="1080" cy="197.3" r="1.2" fill="#c08040"/>
<g transform="translate(1098 189)"><rect x="0" y="0" width="16" height="17" fill="#fff"/><path d="M0 10.5h16M8 10.5v6.5M4 0v10.5M4 5h12M10 5v5.5" stroke="#3d3d3d" stroke-width="1.2"/></g>
<circle cx="1131.5" cy="197.3" r="8" fill="#e6f2f6" stroke="#2a3a40" stroke-width="0.6"/>
<g fill="none" stroke="#6a8a98" stroke-width="0.7"><ellipse cx="1131.5" cy="197.3" rx="3.8" ry="8"/><path d="M1123.5 197.3h16M1125 193h13M1125 201.5h13M1131.5 189.3v16"/></g>
<!-- row3 -->
<g transform="translate(994 211)">
 <path d="M1 2h10l3 2-1 4 2 5-4 3h-6l-4-3z" fill="#a9c4de"/><path d="M1 2h10l-1 4h-9z" fill="#e6e6e6"/><path d="M12 2l3 1-1 6h-3z" fill="#f0cf98"/><path d="M2 10h8l-1 4h-5z" fill="#6d8fb8"/>
</g>
<g transform="translate(1020 212)">
 <rect x="0" y="0" width="16" height="3" fill="#a9c4de"/><rect x="2" y="4" width="12" height="3" fill="#f0cf98"/><rect x="4" y="8" width="8" height="3" fill="#a9c4de"/><rect x="5" y="12" width="6" height="3" fill="#9ab0c8"/>
</g>
<path d="M1047 224a7.3 7.3 0 0 1 11-6.3" fill="none" stroke="#f0cf98" stroke-width="4.2"/><path d="M1058 217.7a7.3 7.3 0 0 1 3.6 6.3" fill="none" stroke="#7ab0a0" stroke-width="4.2"/>
<g transform="translate(1072 212)"><rect x="0" y="0" width="16" height="15" fill="#f4f4f4"/><text x="8" y="9.5" font-size="7.5" text-anchor="middle" fill="#4d6d9a">123</text><rect x="3" y="11.5" width="10" height="1" fill="#555"/></g>
<g transform="translate(1098 211)"><rect x="0" y="0" width="16" height="17" fill="#f4f4f4"/><rect x="1" y="1" width="2" height="15" fill="#9a9a9a"/><path d="M5 3h5M5 5h7M5 10h5M5 12h7" stroke="#7090b0" stroke-width="0.9"/></g>
<g transform="translate(1124 212)"><rect x="0" y="0" width="16" height="14" fill="#f4f4f4"/><path d="M4 7l2-3 2 3zM9 4h5l-2.5 3z" fill="#666"/><rect x="3" y="10" width="10" height="1" fill="#555"/></g>
<!-- row4 -->
<g transform="translate(994 234)"><rect x="0" y="0" width="16" height="16" fill="#fff"/><rect x="0" y="0" width="16" height="2.5" fill="#3f76b2"/><rect x="2" y="5" width="2" height="2" fill="#9ab"/><rect x="2" y="9" width="2" height="2" fill="#9ab"/><rect x="2" y="13" width="2" height="2" fill="#9ab"/><path d="M8 10h9l-3.5 4v4h-2v-4z" fill="#8a8a8a" stroke="#3d3d3d" stroke-width="0.8"/></g>
<g transform="translate(1020 234)"><rect x="0" y="0" width="16" height="16" fill="#fff"/><rect x="0" y="0" width="16" height="2.5" fill="#4a6a9a"/><path d="M0 6.5h16M0 11h16M5.5 2v14M10.5 2v14" stroke="#b0b0b0" stroke-width="0.8"/></g>
<g transform="translate(1046 234)"><rect x="0" y="0" width="16" height="16" fill="#dde6f0"/><rect x="0" y="0" width="16" height="2" fill="#3f76b2"/><rect x="0" y="2" width="7" height="14" fill="#fff"/><path d="M0 6.5h16M0 11h16M7 2v14M11.5 2v14" stroke="#b0b0b0" stroke-width="0.8"/></g>
<text x="1073" y="250.5" font-size="18.5" font-weight="bold" fill="#8ab4e0">R</text>
<g fill="#ddd"><circle cx="1100.5" cy="241" r="1.3"/><circle cx="1106.5" cy="241" r="1.3"/><circle cx="1112.5" cy="241" r="1.3"/></g>
<!-- tab icons -->
<g fill="none" stroke="#e8e8e8" stroke-width="1.2">
 <path d="M1004 263.5h19"/><path d="M1004 268h19M1004 273h19M1004 280.5h19M1004 268v12.5M1023 268v12.5" stroke-dasharray="2 1.2"/>
 <rect x="1042.5" y="263.5" width="14" height="4.5" rx="1"/><path d="M1056.5 265.8h2v4h-8v3"/><rect x="1049" y="272.5" width="3" height="9" rx="0.5"/>
 <circle cx="1085.8" cy="271.3" r="7.3"/><path d="M1091 276.5l5 5"/><path d="M1079.5 273l3-3 3 2 4-4.5M1081 274v4.5M1084 273v5.5M1087 273.5v4.5M1090 271v3"/>
</g>
<rect x="1033.4" y="286.8" width="34" height="2.6" fill="#e8c77a"/>
<!-- search -->
<rect x="989" y="293" width="176.5" height="27.5" fill="#262626" stroke="#1d1d1d" stroke-width="1"/>
<g fill="none" stroke="#9a9a9a" stroke-width="1.2"><circle cx="1009" cy="304.5" r="4.8"/><path d="M1005.5 308l-5 5"/></g>
<text x="1022.8" y="311.2" font-size="11.1" fill="#a0a0a0">Search</text>
<!-- yaxis header -->
<rect x="985" y="346" width="183" height="1" fill="#333"/>
<path d="M994 337l5-5 5 5" fill="none" stroke="#d8d8d8" stroke-width="1.3"/>
<g fill="#f2f2f2" font-size="11.2">
<text x="1010.3" y="337.5">Y-Axis</text><text x="1101.5" y="338" font-size="12">On</text>
<text x="993.5" y="371">Position</text><text x="993.5" y="404.5">Scale type</text><text x="993.5" y="438">Start</text>
<text x="993.5" y="471.5">End</text><text x="993.5" y="504.5">Color</text><text x="993.5" y="538">Text size</text>
<text x="993.5" y="572">Font family</text><text x="993.5" y="605">Display u...</text>
</g>
<rect x="1129.5" y="333" width="16" height="2" fill="#f0f0f0"/><circle cx="1150" cy="334" r="7" fill="#fafafa"/>
<!-- controls -->
<rect x="1073.3" y="357" width="82" height="20" fill="#5e5e5e"/><rect x="1073.3" y="357" width="82" height="1" fill="#303030"/>
<rect x="1073.3" y="389.5" width="82" height="21.5" fill="#5e5e5e"/><rect x="1073.3" y="389.5" width="82" height="1" fill="#303030"/>
<rect x="1073.3" y="411" width="82" height="1.5" fill="#2e2e2e"/>
<rect x="1073.3" y="412.5" width="82" height="20.5" fill="#5e5e5e"/>
<path d="M1073.3 433h82v17a3 3 0 0 1-3 3h-76a3 3 0 0 1-3-3z" fill="#9c9c9c"/>
<rect x="1073.3" y="456.5" width="82" height="22" fill="#494949" stroke="#5a5a5a" stroke-width="1"/>
<rect x="1113" y="489.5" width="41.5" height="21" fill="#484848" stroke="#2e2e2e" stroke-width="1"/>
<rect x="1118.5" y="493.5" width="12" height="12" fill="#b5533a" stroke="#333" stroke-width="1"/>
<rect x="1097.5" y="523.5" width="57.5" height="21" fill="#5e5e5e" stroke="#333" stroke-width="0.8"/>
<rect x="1073.3" y="557" width="82" height="21" fill="#5e5e5e" stroke="#333" stroke-width="0.8"/>
<rect x="1073.3" y="590" width="82" height="21" fill="#5e5e5e" stroke="#333" stroke-width="0.8"/>
<rect x="1097.5" y="623" width="57.5" height="10" fill="#5e5e5e" stroke="#333" stroke-width="0.8"/>
<g fill="#c8c8c8"><path d="M1144 366h6.5l-3.25 3.5z M1144 399h6.5l-3.25 3.5z M1137 499h6.5l-3.25 3.5z M1144 566h6.5l-3.25 3.5z M1144 599h6.5l-3.25 3.5z"/>
<path d="M1141.5 531.5l4-4 4 4z M1141.5 536.5l4 4 4-4z"/></g>
<rect x="1136" y="385.5" width="24" height="27.5" fill="none" stroke="#f2f01e" stroke-width="3"/>
<g fill="#f2f2f2" font-size="11.2">
<text x="1077" y="371">Left</text><text x="1077.5" y="405">Log</text><text x="1077" y="426">Linear</text><text x="1077.5" y="446.5">Log</text>
<text x="1106" y="538.5">15</text><text x="1077" y="572">Segoe UI</text><text x="1077" y="605">Thousands</text>
</g>
<text x="1078" y="471.5" font-size="11.2" fill="#7a7a7a">Auto</text>
<rect x="1163" y="366" width="5" height="130" fill="#777"/>
</svg>

</body></html>
